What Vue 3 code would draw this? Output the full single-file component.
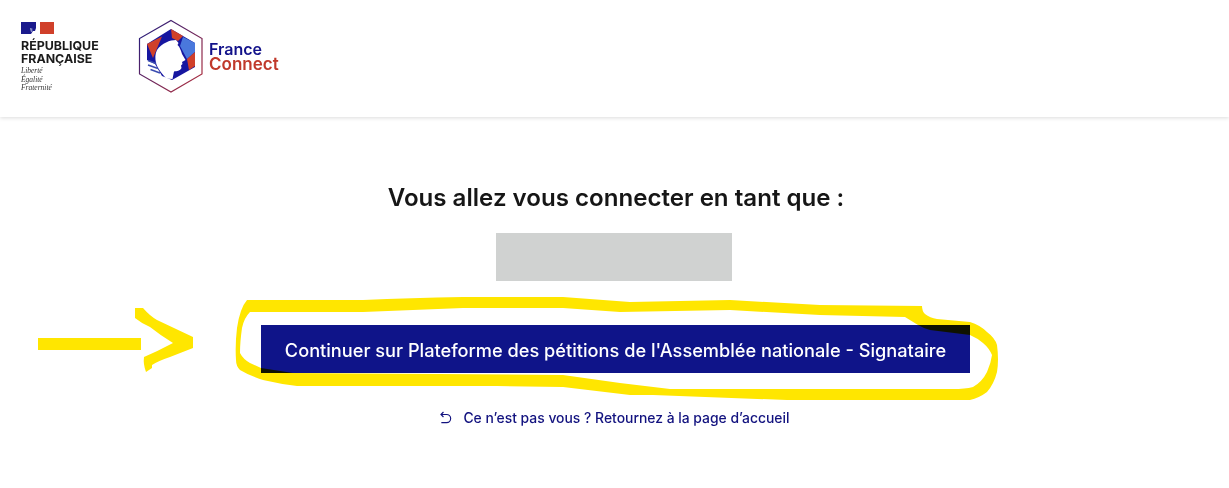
<script setup>
const mottoLines = ['Liberté', 'Égalité', 'Fraternité']
</script>

<template>
  <div class="page">
    <header class="header">
      <div class="rf">
        <svg class="flag" viewBox="0 0 33 12" width="33" height="12">
          <rect width="15" height="12" fill="#1a1a8c" />
          <rect x="19" width="14" height="12" fill="#d0402a" />
          <path d="M10 12 L12 9 L14 9 L15 6 L15 12Z" fill="#fff" />
          <path d="M9 6 L12 7 L10 8 L12 9 L10 10Z" fill="#aab2da" />
        </svg>
        <div class="rf-name">RÉPUBLIQUE<br />FRANÇAISE</div>
        <div class="motto">
          <div v-for="line in mottoLines" :key="line">{{ line }}</div>
        </div>
      </div>

      <div class="fc">
        <svg class="fc-mark" viewBox="138 18 66 76" width="66" height="76">
          <defs>
            <linearGradient id="hexStroke" x1="0" y1="0" x2="1" y2="1">
              <stop offset="0" stop-color="#1a1a80" />
              <stop offset="1" stop-color="#b8303a" />
            </linearGradient>
          </defs>
          <polygon points="171,20.5 202,38.5 202,74 171,92 139.5,74 139.5,38.5" fill="#fff" stroke="url(#hexStroke)" stroke-width="1.2" />
          <polygon points="171,29 195,43 195,67 172,80 162,76 155,64 147,60 147,44" fill="#1616a0" />
          <polygon points="147,44 162,36.5 153,58" fill="#d0402a" />
          <polygon points="171,29 183,36 178,41 172,38" fill="#d0402a" />
          <polygon points="183,37 195,43 195,52 187,59 180,46" fill="#4a78dc" />
          <polygon points="195,52 195,66 189,70 187,59" fill="#d0402a" />
          <path d="M157 50 C162 43 170 40 176 40 L178.5 43 L177.5 45 C180 47 181 51 182 54 L185.5 60 L182 62 L182.5 64 L181 65.5 L181.5 68 C180 71 177 71 174 71.5 L172.5 79 L166 78.5 C163 74 158 70 156 63 C155 58 155 54 157 50Z" fill="#fff" />
          <g class="wings">
            <path d="M148 60.5 L156 63.5" />
            <path d="M148 65 L158 68.5" />
            <path d="M150.5 69.5 L160 73" />
          </g>
        </svg>
        <div class="fc-name">
          <span class="fc-france">France</span>
          <span class="fc-connect">Connect</span>
        </div>
      </div>
    </header>

    <main class="main">
      <h1 class="title">Vous allez vous connecter en tant que :</h1>
      <div class="masked"></div>
      <button class="continue" type="button">Continuer sur Plateforme des pétitions de l'Assemblée nationale - Signataire</button>
      <a class="back" href="#">
        <svg viewBox="0 0 24 24" width="14" height="14">
          <path fill="currentColor" d="M5.828 7l2.536 2.536L6.95 10.95 2 6l4.95-4.95 1.414 1.414L5.828 5H13a8 8 0 1 1 0 16H4v-2h9a6 6 0 1 0 0-12H5.828z" />
        </svg>
        <span>Ce n’est pas vous ? Retournez à la page d’accueil</span>
      </a>
    </main>

    <svg class="marker" viewBox="0 0 1229 488" width="1229" height="488">
      <rect x="38" y="338" width="103" height="12" />
      <path d="M135 308 L143 308 Q150 316 157 320 L193 337 L193 348 L170 357 Q158 361 152 365 L152 368 L146 372 Q143 364 144 357 Q158 351 173 343 Q160 335 150 327 Q141 323 135 318Z" />
      <path fill-rule="evenodd" d="M247 300 L363 300 Q410 298 463 297 L563 297 L630 302 L730 300 L820 305 L922 306 Q922 311 925 314 Q930 318 937 319 L970 322 Q980 325 987 332 Q995 338 997 345 Q999 360 997 372 Q994 384 987 392 Q979 398 970 400 L787 400 L653 395 L630 395 L563 387 L497 386 L297 386 Q280 384 263 380 Q250 376 240 370 Q236 366 236 360 Q235 345 237 328 Q240 308 247 300Z
        M250 312 Q244 318 242 328 Q240 342 240 353 Q243 359 250 363 L261 368 L293 373 L563 375 L620 383 L670 389 L953 389 Q965 389 973 387 Q982 382 987 372 Q991 363 992 355 Q989 348 983 343 Q977 338 970 335 L930 330 Q923 328 918 325 L905 317 L820 315 L730 310 L620 312 L563 308 L463 308 L363 312Z" />
    </svg>
  </div>
</template>

<style scoped>
.page {
  position: relative;
  width: 1229px;
  height: 488px;
  overflow: hidden;
  background: #fff;
  font-family: Inter, "Noto Sans", sans-serif;
}
.header {
  height: 117px;
  box-sizing: border-box;
  padding: 22px 0 0 21px;
  display: flex;
  align-items: flex-start;
  box-shadow: 0 1px 4px rgba(0, 0, 0, 0.14);
}
.rf {
  width: 117px;
  flex: none;
}
.flag {
  display: block;
}
.rf-name {
  margin-top: 5px;
  font-size: 12.4px;
  line-height: 13px;
  font-weight: 700;
  color: #1b1b1b;
  white-space: nowrap;
}
.motto {
  margin-top: 2px;
  font-family: "Liberation Serif", serif;
  font-style: italic;
  font-size: 7.5px;
  line-height: 8.5px;
  color: #333;
}
.fc {
  display: flex;
  align-items: center;
  margin-top: -4px;
  height: 76px;
}
.fc-mark {
  display: block;
}
.wings {
  fill: none;
  stroke: #3a4cb0;
  stroke-width: 1.6;
}
.fc-name {
  display: flex;
  flex-direction: column;
  margin: 1px 0 0 5px;
  font-size: 16px;
  line-height: 15px;
  font-weight: 600;
}
.fc-france {
  color: #12128a;
}
.fc-connect {
  font-size: 17px;
  color: #c0392b;
}
.main {
  display: flex;
  flex-direction: column;
  align-items: center;
  padding-top: 66px;
}
.title {
  margin: 0 0 0 3px;
  font-size: 24.1px;
  line-height: 30px;
  font-weight: 600;
  color: #161616;
  white-space: nowrap;
}
.masked {
  width: 236px;
  height: 48px;
  margin: 20px 0 0 -1px;
  background: #d0d2d1;
}
.continue {
  width: 709px;
  height: 48px;
  margin: 44px 0 0 2px;
  padding: 1px 0 0;
  border: 0;
  background: #0f1489;
  color: #fff;
  font-family: inherit;
  font-size: 18.2px;
  font-weight: 500;
}
.back {
  display: flex;
  align-items: center;
  gap: 10px;
  margin: 35px 0 0;
  color: #12127f;
  font-size: 13.9px;
  font-weight: 500;
  line-height: 20px;
  text-decoration: none;
}
.marker {
  position: absolute;
  left: 0;
  top: 0;
  fill: #ffe600;
  mix-blend-mode: multiply;
  pointer-events: none;
}
</style>
